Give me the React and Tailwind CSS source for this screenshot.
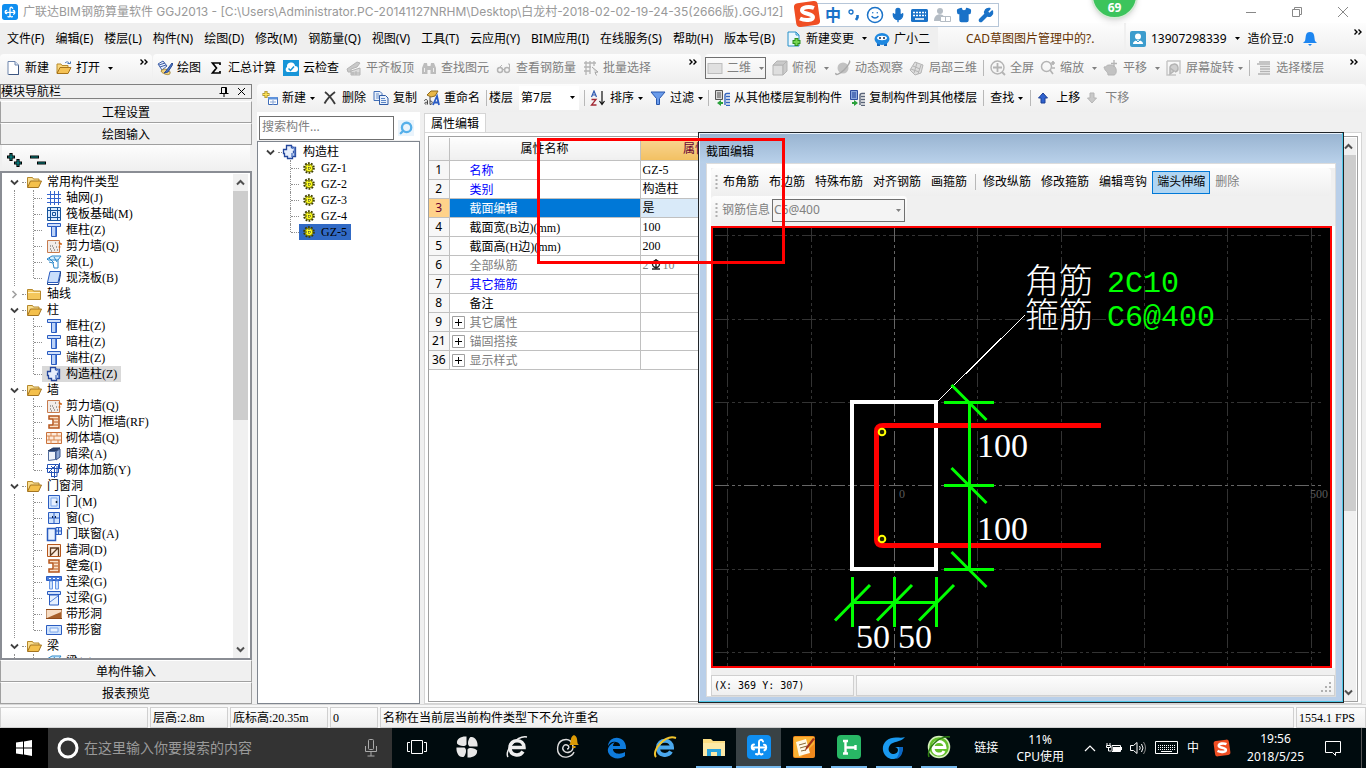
import React from "react";
import { Mic, Shirt, Wrench, Smile, Search } from "lucide-react";

const BAR = "bg-linear-to-b from-[#fdfdfd] to-[#efefef]";

function Svg({ w = 16, h = 16, vb, children, className = "" }) {
  return (
    <svg width={w} height={h} viewBox={vb || `0 0 ${w} ${h}`} className={`shrink-0 ${className}`} fill="none" aria-hidden="true">
      {children}
    </svg>
  );
}

const Arrow = ({ className = "" }) => (
  <Svg w={5} h={3} className={className}><path d="M0 0h5L2.5 3z" fill="currentColor" /></Svg>
);

const More = ({ className = "" }) => (
  <Svg w={8} h={6} className={className}><path d="M.5 0.5 3 3 .5 5.500M4.500 .5 7 3 4.500 5.500" stroke="#000" strokeWidth="1.400" /></Svg>
);

const Sep = ({ className = "" }) => <span className={`h-4 w-px shrink-0 bg-[#b8b8b8] ${className}`} />;

/* ---------- toolbar icons ---------- */
const G = "#b4b4b4";
const toolIcons = {
  doc: <><path d="M3 1.500h7l3.500 3.500v9.500H3z" fill="#fff" stroke="#6f86ad" /><path d="M10 1.500V5h3.500" stroke="#6f86ad" fill="#dce6f5" /><path d="M4 14.500h9.500v-9" stroke="#3c5580" /></>,
  open: <><path d="M1 13V4h4l1 1.500h6V8l-8 1z" fill="#f9d77e" stroke="#b98b2b" /><path d="M1 13.500 4 7.500h11l-3 6z" fill="#f5c255" stroke="#a8741a" /><path d="M9 3c2-2 4-1 4.500 1M11.500 3.500h3v-2" stroke="#4573b5" /></>,
  paint: <><path d="M1 4 6 1l4 5-5 4z" fill="#e7eefb" stroke="#3d5ea8" /><path d="M2 5l6-2M3 7l6-2" stroke="#3d5ea8" /><path d="M4 11c2-3 8-2 9 1s-3 3-5 2-3-1-4-3z" fill="#f2d27c" stroke="#a88a3a" /><path d="M15 3 9 11l-2 2 4-1 5-8z" fill="#4a76c9" stroke="#2c4c92" /></>,
  sum: <path d="M12 5V3H4.500l4 5-4 5H12v-2" stroke="#000" strokeWidth="1.700" />,
  cloud: <><rect width="16" height="16" fill="#1795d8" /><path d="M4 12a3 3 0 0 1 0-5 4 4 0 0 1 8-1 3 3 0 0 1 0 6z" fill="#fff" /><path d="m5.500 8.500 2 2 3.500-4" stroke="#1795d8" strokeWidth="1.500" /></>,
  align: <><path d="M1 9 11 2l3 1-3 4-6 2v3H2z" fill="#c9c9c9" stroke={G} /><path d="M5 15V11l9-3v7z" fill="#dcdcdc" stroke={G} /><path d="M7 15v-3M10 15v-4M5 13h9" stroke={G} /></>,
  find: <><path d="M1 14V8l2-5h3l.5 3h3l.5-3h3l2 5v6H9.500v-4h-3v4z" fill="#bdbdbd" /><path d="M3.500 12V8M12.500 12V8" stroke="#eee" /></>,
  glasses: <><circle cx="4" cy="10" r="2.500" stroke={G} strokeWidth="1.500" /><circle cx="11" cy="10" r="2.500" stroke={G} strokeWidth="1.500" /><path d="M6.500 9.500h2M2 9l4-4M13.500 9V4H12" stroke={G} /></>,
  batch: <><path d="M1 3h12M1 7h7M1 11h6M3 1v14M7 1v13M11 1v5" stroke={G} strokeWidth="1.300" /><path d="m9 7 6 5-3 .5 1.500 3" stroke="#a6a6a6" fill="#ddd" /></>,
  flat: <rect x="1" y="3.500" width="14" height="10" fill="#e0e0e0" stroke="#bdbdbd" />,
  cube: <><path d="M1 5h10v10H1z" fill="#dedede" stroke={G} /><path d="M1 5 5 1h10l-4 4zM11 15l4-4V1l-4 4z" fill="#cacaca" stroke={G} /></>,
  planet: <><circle cx="8" cy="8" r="5.500" fill="#c2c2c2" /><path d="M1 13c-1 3 4 1 8-3s7-9 5-9" stroke="#a9a9a9" strokeWidth="1.500" /></>,
  cubes: <><path d="M1 10 6 2l8 3-2 8-6 2z" fill="#ddd" stroke={G} /><path d="m4 6 7 3M8 3 5 13M12 5l-3 9M2 9l8 3" stroke={G} /></>,
  full: <><circle cx="7.500" cy="7.500" r="6.500" stroke={G} strokeWidth="1.400" /><path d="M7.500 3v9M3 7.500h9M12 12l3 3" stroke={G} strokeWidth="1.800" /></>,
  zoom: <><circle cx="6.500" cy="6.500" r="5" stroke={G} strokeWidth="1.500" /><path d="m10 10 3 4M11 3h4M13 1v4M12 8h3" stroke={G} strokeWidth="1.700" /></>,
  pan: <><path d="M1 7c3 0 2-2 5-2s6 0 7 4-1 6-2 6H5c0-4-3-3-4-8z" fill="#c2c2c2" stroke={G} /><path d="M11 0v7M8 3.500h6" stroke={G} strokeWidth="1.300" /></>,
  rotate: <><path d="M1 1h13v13M1 1v14h9" stroke="#c5c5c5" strokeWidth="1.400" /><path d="M4 8a4 4 0 1 1 5 4M4 8l4 3-4 3z" stroke={G} fill="#cfcfcf" strokeWidth="1.500" /></>,
  floors: <path d="M3 2h11M1 4h13M4 6.500h10M4 9h10M4 11.500h10M2 14h12" stroke={G} strokeWidth="1.500" />,
  add: <><path d="M6.500 7.500h9v7h-9z" fill="#fff" stroke="#3f6db8" /><path d="M6 7h9.500v2.500H6z" fill="#5f93dc" /><path d="M8 12h6M11 10v5" stroke="#8aa7d6" /><path d="M4 1v7M.5 4.500h7" stroke="#9d8420" strokeWidth="3" /><path d="M4 1.500v6M1 4.500h6" stroke="#ffe35a" strokeWidth="1.400" /></>,
  del: <path d="M3 2c4 3 7 7 10 12M13 2C9 5 5 9 2.500 13.500" stroke="#3b3b3b" strokeWidth="1.800" />,
  copy: <><path d="M1 1.500h6l2 2v7H1z" fill="#e8f0fb" stroke="#426fb7" /><path d="M3 4h3M3 6h4M3 8h4" stroke="#6b8fc9" /><path d="M6.500 5.500h6l2.500 2.500v6.500H6.500z" fill="#e8f0fb" stroke="#2f5ba5" /><path d="M8 8.500h4M8 10.500h5M8 12.500h5" stroke="#5d86c6" /></>,
  rename: <><path d="M3 5 7 1h7l-3 5-4 1z" fill="#e8b84a" stroke="#8f6a1e" /><path d="M.5 11c0-2 3-2 3 0v3.500M3.500 12.500c-3.500-1-3.500 2-1 1.500M6 7v7.500c3 0 3-4 0-3.500" stroke="#444" /><path d="m9 15 4-9 2 9M10 12.500h5" stroke="#2b5cc4" strokeWidth="1.800" /></>,
  sort: <><path d="m1.500 7 2.500-6 2.500 6M2.500 5h3" stroke="#2f59b0" strokeWidth="1.200" /><path d="M1.500 9.500H6L1.500 15H6.500" stroke="#a32a35" strokeWidth="1.300" /><path d="M12 1v13M9.500 11l2.500 3.500 2.500-3.500" stroke="#111" strokeWidth="1.200" /></>,
  filter: <path d="M1 2h14L9.500 8.500v6h-3v-6z" fill="#6a9ceb" stroke="#2957ad" />,
  floorCopy: <><path d="M1.500.5h7v9h-7z" fill="#d9d9d9" stroke="#555" /><path d="M3 3h4M3 5h4M3 7h4" stroke="#555" /><path d="M16 3.500h-3q-2 0-2 2v9.500M16 6.500h-4M16 9.500h-4M16 12.500h-4M16 15.500h-4" stroke="#3365c0" strokeWidth="1.400" /><path d="m7 10-4 3 4 3v-2h2v-2H7z" fill="#2aa13b" /></>,
  floorTo: <><path d="M1.500.5h7v9h-7z" fill="#8aa8de" stroke="#2f4fa0" /><path d="M3 3h4M3 5h4M3 7h4" stroke="#1d3f96" /><path d="M16 3.500h-3q-2 0-2 2v9.500M16 6.500h-4M16 9.500h-4M16 12.500h-4M16 15.500h-4" stroke="#5a6478" strokeWidth="1.400" /><path d="m5 10 4 3-4 3v-2H3v-2h2z" fill="#2aa13b" /></>,
  up: <path d="m5 1 4.500 5H7v5H3V6H.5z" fill="#2f62cf" stroke="#1c3f94" />,
  down: <path d="m5 11 4.500-5H7V1H3v5H.5z" fill="#c9c9c9" stroke="#b5b5b5" />,
  change: <><path d="M2 1h8l3 3v11H2z" fill="#eaf6fd" stroke="#2690c9" /><path d="M10 1v3h3" stroke="#2690c9" /><path d="M10.500 7v8M6.500 11h8" stroke="#2c8f1e" strokeWidth="4" /><path d="M10.500 8v6M7.500 11h6" stroke="#76d651" strokeWidth="2" /></>,
};

function Tool({ icon, label, arrow, disabled, small }) {
  return (
    <button type="button" disabled={disabled} className={`flex shrink-0 items-center gap-1 whitespace-nowrap ${disabled ? "text-[#808080]" : "text-black"}`}>
      {icon && (small ? <Svg w={14} h={12} vb="0 0 14 12">{toolIcons[icon]}</Svg> : <Svg>{toolIcons[icon]}</Svg>)}
      <span>{label}</span>
      {arrow && <Arrow className={arrow === "far" ? "ml-1" : ""} />}
    </button>
  );
}

/* ---------- tree icons ---------- */
const B = "#2a5cc0";
const O = "#b5561c";
const gzIcon = <><path d="M4.500 1.500h5v2h4v4h-2v1h2v4h-3v2h-5v-2h-3v-3h-1v-4h3z" fill="#e6eefc" stroke="#24479c" strokeWidth="1.300" /><path d="M10.500 2v3M12.500 3v9M10 9v4" stroke="#5d80c8" strokeWidth="1.500" /></>;
const nicheIcon = <><path d="M3 2h10v12H3v-3h4V5H3z" fill="#fbe1c8" stroke={O} strokeWidth="1.500" /><path d="M8 5h4M8 8h4M8 11h4" stroke={O} /></>;
const colIcon = <><path d="M1.500 1.500h13v3h-13z" fill="#cfe0fb" stroke={B} /><path d="M5.500 4.500h5v10h-5z" fill="#bcd3f8" stroke={B} /><path d="M9.500 5v9" stroke="#5482db" /></>;
const shearIcon = <><path d="M1.500 2.500h12v12h-12z" fill="#f2ece8" stroke="#c77b4e" /><path d="M4 11h1M6 8h1M8 12h1M10 9h1M5 13h1M9 5h1M11 12h1M4 8h1M7 10h1" stroke="#555" /><path d="M13.500 4v2M13.500 8v2M15 5v2" stroke="#d2691e" strokeWidth="1.500" /></>;
const treeIcons = {
  grid: <path d="M1 4.500h14M1 8.500h14M1 12.500h14M4.500 1v14M8.500 1v14M12.500 1v14" stroke="#3565cf" />,
  raft: <><path d="M1.500 1.500h13v13h-13z" fill="#dcecff" stroke="#16539b" /><path d="M1 4.500h14M1 11.500h14M4.500 1v14M11.500 1v14" stroke="#16539b" /><path d="M6.500 6.500h3v3h-3z" stroke="#16539b" /></>,
  column: colIcon,
  shear: shearIcon,
  beam: <><path d="M1 5 6 2h9l-3 4H2z" fill="#d6efff" stroke="#2a86c9" /><path d="M12 6v8H8l-1-5-4-1M3 4l5 5M8 3l3 5" stroke="#2a86c9" /></>,
  slab: <><path d="M4 1.500h10.500l-2.500 11H1.500z" fill="#c9defb" stroke={B} /><path d="M1.500 12.500v2h11l2-10v-3" stroke="#1c438f" /></>,
  gz: gzIcon,
  niche: nicheIcon,
  brick: <><path d="M.5 2.500h15v11H.5z" fill="#fdebdc" stroke="#c9713a" /><path d="M1 6h14M1 10h14M5 3v3M11 3v3M8 6v4M3 6v4M5 10v4M12 10v4" stroke="#d8864f" /></>,
  dark: <><path d="M2 5 7 2h7l-4 3z" fill="#2b4474" stroke="#22375f" /><path d="M2.500 5.500h7v8l-7 1z" fill="#eef3fb" stroke="#4f6a9b" /><path d="M10 5.500 14 3v8l-4 3z" fill="#8fa9d5" stroke="#3b558a" /></>,
  rebar: <><path d="M1.500 2.500h11v8h-11zM0 6.500h16M8.500 4v12M5.500 9v6M5 14.500h6V4M13.500 1v6" stroke="#2452b5" /><path d="M3 10 10 3M5 4l2 2" stroke="#2452b5" /></>,
  door: <><path d="M2.500 1.500h11v13h-11z" fill="#cfe3fd" stroke={B} /><path d="M5 4h6v8H5z" fill="#e7f1ff" stroke="#7fa8ea" /><path d="M10.500 7v2" stroke="#123" strokeWidth="1.500" /></>,
  window: <><path d="M2.500 2.500h11v11h-11z" fill="#cfe3fd" stroke={B} /><path d="M8 2v12M2 8h12" stroke={B} /><path d="M6.500 6v2M9.500 6v2" stroke="#124" /></>,
  doorwin: <><path d="M1.500 2.500h8v12h-8z" fill="#e7f1ff" stroke={B} strokeWidth="1.500" /><path d="M10 1.500h5.500v7H10zM12.500 1v8M10 5h6" fill="#cfe3fd" stroke={B} /></>,
  hole: <><path d="M1.500 2.500h13v12h-13z" fill="#fdebdc" stroke={O} /><path d="M4.500 14V6h8v8M5 13l7-7" stroke="#5b3a20" strokeWidth="1.300" /></>,
  lian: <><path d="M.5 2.500h15v4H.5z" fill="#4a7ddb" stroke={B} /><path d="M3.500 7h3v8h-3zM9.500 7h3v8h-3z" fill="#cfe3fd" stroke="#6796e6" /><path d="M3 4.500h2M7 4.500h2M11 4.500h2" stroke="#fff" /></>,
  guo: <><path d="M1.500 1.500h13v3h-13z" fill="#cfe0fb" stroke={B} /><path d="M3.500 5h9v10h-9z" fill="#e7f1ff" stroke={B} /><path d="m4 12 8-6" stroke="#5482db" /></>,
  striphole: <><path d="M0 3.500h16v9H0z" fill="#f7dcc2" stroke="#8f4a1a" /><path d="M1 12 15 6v6z" fill="#a8602b" /></>,
  stripwin: <><path d="M.5 3.500h15v9H.5z" fill="#cfe3fd" stroke={B} /><path d="M4 6h8v4H4z" fill="#eaf3ff" stroke="#7fa8ea" /></>,
  folder: <><path d="M1.500 13.500v-10h5l1 1.500h7v8.500z" fill="#f4c75c" stroke="#b5882c" /><path d="M2 6.500h12" stroke="#fff0bd" /></>,
  folderOpen: <><path d="M1.500 13v-9.500h5l1 1.500h5.500v3l-8 1z" fill="#fbdf90" stroke="#b5882c" /><path d="M1.500 13.500 4.500 7h11l-3 6.500z" fill="#f4c04c" stroke="#a37420" /></>,
};

const Chevron = ({ closed }) => (
  <Svg w={9} h={9}>
    {closed ? <path d="M2.500 1 6 4.500 2.500 8" stroke="#a0a0a0" strokeWidth="1.600" /> : <path d="M1 2.500 4.500 6 8 2.500" stroke="#404040" strokeWidth="1.800" />}
  </Svg>
);

const tree = [
  ["常用构件类型", [["grid", "轴网(J)"], ["raft", "筏板基础(M)"], ["column", "框柱(Z)"], ["shear", "剪力墙(Q)"], ["beam", "梁(L)"], ["slab", "现浇板(B)"]]],
  ["轴线", null],
  ["柱", [["column", "框柱(Z)"], ["column", "暗柱(Z)"], ["column", "端柱(Z)"], ["gz", "构造柱(Z)", true]]],
  ["墙", [["shear", "剪力墙(Q)"], ["niche", "人防门框墙(RF)"], ["brick", "砌体墙(Q)"], ["dark", "暗梁(A)"], ["rebar", "砌体加筋(Y)"]]],
  ["门窗洞", [["door", "门(M)"], ["window", "窗(C)"], ["doorwin", "门联窗(A)"], ["hole", "墙洞(D)"], ["niche", "壁龛(I)"], ["lian", "连梁(G)"], ["guo", "过梁(G)"], ["striphole", "带形洞"], ["stripwin", "带形窗"]]],
  ["梁", [["beam", "梁(L)"]]],
];

const SIM = "font-['Liberation_Serif','Noto_Sans_CJK_SC',serif]";

function ChildRow({ icon, label, last, tone = "" }) {
  return (
    <li className="flex h-4 items-center">
      <span className={`w-px self-start border-l border-dotted border-[#909090] ${last ? "h-2" : "h-4"}`} />
      <span className="w-2 border-t border-dotted border-[#909090]" />
      <button type="button" className={`flex h-4 items-center gap-1 whitespace-nowrap pr-1 pl-1 ${tone}`}>
        {icon}
        <span>{label}</span>
      </button>
    </li>
  );
}

function ParentRow({ closed, icon, label }) {
  return (
    <button type="button" className="flex h-4 items-center whitespace-nowrap">
      <Chevron closed={closed} />
      <span className="ml-[3px] w-1 border-t border-dotted border-[#909090]" />
      <Svg className="mr-[5px]">{icon}</Svg>
      <span>{label}</span>
    </button>
  );
}

function ModuleTree() {
  return (
    <ul className={`min-w-0 flex-1 overflow-hidden pl-2 leading-4 ${SIM}`}>
      {tree.map(([name, kids]) => (
        <li key={name}>
          <ParentRow closed={!kids} icon={kids ? treeIcons.folderOpen : treeIcons.folder} label={name} />
          {kids && (
            <ul className="ml-1 border-l border-dotted border-[#909090] pl-[18px]">
              {kids.map(([ic, label, sel], i) => (
                <ChildRow key={label} last={i === kids.length - 1} label={label} tone={sel ? "bg-[#d9d9d9]" : ""} icon={<Svg>{treeIcons[ic]}</Svg>} />
              ))}
            </ul>
          )}
        </li>
      ))}
    </ul>
  );
}

function ScrollBar({ thumb }) {
  return (
    <div className="flex w-[15px] shrink-0 flex-col items-center bg-[#f0f0f0]">
      <div className="flex h-[17px] items-center"><Svg w={9} h={9}><path d="M1 6.500 4.500 3 8 6.500" stroke="#505050" strokeWidth="2" /></Svg></div>
      <div className="w-full flex-1"><div className={`w-full bg-[#cdcdcd] ${thumb}`} /></div>
      <div className="flex h-[17px] items-center"><Svg w={9} h={9}><path d="M1 2.500 4.500 6 8 2.500" stroke="#505050" strokeWidth="2" /></Svg></div>
    </div>
  );
}

const NavButton = ({ children }) => (
  <button type="button" className="h-[22px] w-full shrink-0 border border-[#a0a0a0] border-t-white bg-[#f0f0f0] text-center leading-[22px]">{children}</button>
);

function LeftPanel() {
  return (
    <aside className="flex w-[253px] shrink-0 flex-col pr-px">
      <div className="mb-0.5 flex h-[15px] shrink-0 items-center border border-[#808080] leading-[14px]">
        <span className="flex-1">模块导航栏</span>
        <button type="button" aria-label="固定" className="mr-1.5 flex size-3 items-center"><Svg w={10} h={10}><path d="M2.500 6V.5h5V6M.5 6.500h9M5 7v3M6.500 1v5" stroke="#000" /></Svg></button>
        <button type="button" aria-label="关闭" className="mr-0.5 flex size-3 items-center"><Svg w={9} h={9}><path d="m1 1 7 7M8 1 1 8" stroke="#000" /></Svg></button>
      </div>
      <NavButton>工程设置</NavButton>
      <NavButton>绘图输入</NavButton>
      <div className={`mx-0.5 flex h-[26px] shrink-0 items-center gap-2 px-1 pt-1 ${BAR}`}>
        <button type="button" aria-label="全部展开"><Svg><path d="M5 1v8M1 5h8M12 7v8M8 11h8" stroke="#000" strokeWidth="3.200" /><path d="M5 2v6M2 5h6M12 8v6M9 11h6" stroke="#0a8f8f" strokeWidth="1.200" /></Svg></button>
        <button type="button" aria-label="全部折叠"><Svg><path d="M0 5h9M7 11h9" stroke="#000" strokeWidth="3.200" /><path d="M1 5h7M8 11h7" stroke="#0a8f8f" strokeWidth="1.200" /></Svg></button>
      </div>
      <div className="flex min-h-0 flex-1 border-2 border-[#8a8d94] bg-white pt-px pr-0.5">
        <ModuleTree />
        <ScrollBar thumb="h-[229px]" />
      </div>
      <NavButton>单构件输入</NavButton>
      <NavButton>报表预览</NavButton>
    </aside>
  );
}

const sun = (
  <Svg w={12} h={12}>
    <circle cx="6" cy="6" r="4.800" stroke="#3d3d00" strokeWidth="2" strokeDasharray="1.800 1.200" />
    <circle cx="6" cy="6" r="3.800" fill="#ffff20" stroke="#7d7d00" />
    <path d="M6 3v6M3 6h6" stroke="#333" strokeDasharray="1 1" />
  </Svg>
);

function ComponentList() {
  return (
    <section className="flex w-[163px] shrink-0 flex-col">
      <div className="flex h-7 shrink-0 items-center bg-white px-0.5 pt-1">
        <input aria-label="搜索构件" placeholder="搜索构件..." className="h-6 w-[135px] border border-[#6f6f6f] bg-white pb-1 pl-0.5 outline-none placeholder:text-[#808080]" />
        <button type="button" aria-label="搜索" className="ml-1 flex size-4 items-center justify-center bg-[#eaf4fc] text-[#56b0ea]"><Search size={14} strokeWidth={4} className="-scale-x-100" /></button>
      </div>
      <div className={`mt-px min-h-0 flex-1 border border-[#7f858e] bg-white pt-0.5 pl-2 leading-4 ${SIM}`}>
        <ParentRow icon={gzIcon} label="构造柱" />
        <ul className="pl-6">
          {["GZ-1", "GZ-2", "GZ-3", "GZ-4", "GZ-5"].map((n, i) => (
            <ChildRow key={n} last={i === 4} label={n} tone={i === 4 ? "bg-[#316ac5]" : ""} icon={<span className="flex w-3.5">{sun}</span>} />
          ))}
        </ul>
      </div>
    </section>
  );
}

const rows = [
  ["1", "名称", "GZ-5", "text-[#0000ff]"],
  ["2", "类别", "构造柱", "text-[#0000ff]"],
  ["3", "截面编辑", "是", "sel"],
  ["4", "截面宽(B边)(mm)", "100", ""],
  ["5", "截面高(H边)(mm)", "200", ""],
  ["6", "全部纵筋", "rebar", "text-[#808080]"],
  ["7", "其它箍筋", "", "text-[#0000ff]"],
  ["8", "备注", "", ""],
  ["9", "其它属性", "", "plus"],
  ["21", "锚固搭接", "", "plus"],
  ["36", "显示样式", "", "plus"],
];

function PropertyPanel() {
  return (
    <section className="flex min-w-0 flex-1 flex-col pr-1">
      <div className="flex h-5 shrink-0 items-end">
        <button type="button" className="-mb-px h-5 border border-b-0 border-[#d5d5d5] bg-white px-1.5 leading-[18px]">属性编辑</button>
      </div>
      <div className="flex min-h-0 flex-1 border border-[#d5d5d5] bg-white p-[3px] pb-px">
        <div className="flex min-h-0 min-w-0 flex-1 border border-[#a0a0a0] pt-px pr-px">
          <div className="min-w-0 flex-1">
            <table className={`w-full table-fixed border-collapse leading-4 ${SIM}`}>
              <colgroup><col className="w-5" /><col className="w-[191px]" /><col className="w-[122px]" /><col /></colgroup>
              <thead>
                <tr className="h-[22px]">
                  <th className={`border-r border-b border-[#c0c0c0] ${BAR}`} aria-label="序号" />
                  <th className={`border-r border-b border-[#c0c0c0] font-normal ${BAR}`}>属性名称</th>
                  <th className="border-r border-b border-[#c0c0c0] bg-linear-to-b from-[#f9d693] to-[#f2c062] font-normal text-[#660033]">属性值</th>
                  <th className={`border-b border-[#c0c0c0] ${BAR}`} aria-label="附加" />
                </tr>
              </thead>
              <tbody>
                {rows.map(([n, name, val, kind]) => (
                  <tr key={n} className="h-[19px]">
                    <td className={`border-r border-b border-[#c0c0c0] p-0 text-center font-['Noto_Sans',sans-serif] ${kind === "sel" ? "bg-[#ffd28a] text-[#660033]" : "bg-[#f7f7f7]"}`}>{n}</td>
                    <td className={`border-r border-b border-[#c0c0c0] p-0 whitespace-nowrap ${kind === "sel" ? "bg-[#0078d7] text-white" : kind === "plus" ? "text-[#808080]" : kind}`}>
                      <div className="flex items-center pt-0.5 pl-0.5">
                        <span className="flex w-[18px]">
                          {kind === "plus" && <Svg w={13} h={13}><path d="M.5.5h12v12H.5z" stroke="#a0a0a0" /><path d="M3 6.500h7M6.500 3v7" stroke="#000" /></Svg>}
                        </span>
                        {name}
                      </div>
                    </td>
                    <td className={`border-r border-b border-[#c0c0c0] p-0 pl-0.5 whitespace-nowrap ${kind === "sel" ? "bg-[#d9eaf9]" : ""}`}>
                      {val === "rebar" ? (
                        <span className="flex items-center gap-0.5 text-[#808080]">2<Svg w={10} h={11}><circle cx="5" cy="5" r="3.500" stroke="#222" strokeWidth="1.400" /><path d="M5 0v10M1 10h8" stroke="#222" strokeWidth="1.400" /></Svg>10</span>
                      ) : val}
                    </td>
                    <td className={`border-b border-[#c0c0c0] p-0 ${kind === "sel" ? "bg-[#d9eaf9]" : ""}`} />
                  </tr>
                ))}
              </tbody>
            </table>
          </div>
          <ScrollBar thumb="h-[356px]" />
        </div>
      </div>
    </section>
  );
}

/* ---------- section drawing ---------- */
function SectionDrawing() {
  const dash = "14 3 3 3 3 3";
  return (
    <svg viewBox="713 228 617 438" preserveAspectRatio="xMidYMid slice" className="block h-full w-full bg-black" role="img" aria-label="构造柱截面">
      <g stroke="#333" strokeDasharray={dash}>
        {[727.5, 811.5, 977.5, 1061.5, 1144.5, 1227.5, 1311.5].map((x) => <path key={x} d={`M${x} 228V666`} />)}
        {[235.5, 319.5, 402.5, 569.5, 652.5].map((y) => <path key={y} d={`M715 ${y}H1324`} />)}
      </g>
      <path d="M894.500 228V666M715 485.500H1324" stroke="#666" strokeDasharray={dash} />
      <g fontFamily="'Liberation Serif', serif" fontSize="12" fill="#5a5a5a"><text x="899" y="498">0</text><text x="1310" y="498">500</text></g>
      <path d="M938 401 1025 315" stroke="#fff" shapeRendering="crispEdges" />
      <rect x="852" y="402" width="84" height="167" stroke="#fff" strokeWidth="4" fill="none" />
      <path d="M1101 425.500H883q-6.500 0-6.500 6v108q0 6 6.500 6H1101" stroke="#f00" strokeWidth="5" fill="none" />
      <circle cx="882" cy="432" r="3.300" stroke="#ff0" strokeWidth="2" fill="#220" />
      <circle cx="882" cy="539" r="3.300" stroke="#ff0" strokeWidth="2" fill="#220" />
      <g stroke="#0f0" strokeWidth="3">
        <path d="M969.500 402V570M852 602.500H937" />
        {[402.5, 485.5, 569.5].map((y) => <path key={y} d={`M944 ${y}H994M951.500 ${y - 17.5}l35 35`} />)}
        {[852.5, 894.5, 936.5].map((x) => <path key={x} d={`M${x} 577V627M${x - 17.5} 620.500l35 -35.500`} />)}
      </g>
      <g fill="#fff" fontFamily="'Liberation Serif', 'Noto Sans CJK SC', serif" fontSize="34">
        <text x="977" y="457">100</text>
        <text x="977" y="540">100</text>
        <text x="856" y="648">50</text>
        <text x="898" y="648">50</text>
        <g fontWeight="300"><text x="1025" y="293">角筋</text><text x="1025" y="327">箍筋</text></g>
      </g>
      <g fill="#0f0" fontFamily="'Liberation Mono', monospace" fontSize="30">
        <text x="1107" y="292">2C10</text>
        <text x="1107" y="326">C6@400</text>
      </g>
    </svg>
  );
}

const Grip = () => <Svg w={3} h={15}><path d="M1.500 0v15" stroke="#b0b0b0" strokeWidth="2" strokeDasharray="2 2" /></Svg>;
const DlgButton = ({ children, active, disabled }) => (
  <button type="button" disabled={disabled} className={`h-[23px] border px-1 whitespace-nowrap ${active ? "border-[#0078d7] bg-[#b0d5f2]" : "border-transparent"} ${disabled ? "text-[#808080]" : ""}`}>{children}</button>
);

function SectionDialog() {
  return (
    <div role="dialog" aria-label="截面编辑" className="absolute top-[132px] left-[698px] flex h-[571px] w-[646px] flex-col border border-[#202428] bg-[#b9cfe9] px-[7px] pb-[5px] shadow-[inset_-1px_-1px_0_#4fc8e8,inset_1px_1px_0_#e8f2fc]">
      <h2 className="-mx-1.5 mt-px h-[29px] shrink-0 bg-linear-to-b from-[#99b4d1] to-[#b9d1ea] pl-1.5 leading-[36px]">截面编辑</h2>
      <div className="flex min-h-0 flex-1 flex-col border border-[#dcdcdc] bg-white pt-1 pl-1">
        <div className="shrink-0 bg-[#f0f0f0]">
          <div className={`mr-1 flex h-7 items-center rounded-sm pl-1 ${BAR}`}>
            <Grip />
            <DlgButton>布角筋</DlgButton><DlgButton>布边筋</DlgButton><DlgButton>特殊布筋</DlgButton><DlgButton>对齐钢筋</DlgButton><DlgButton>画箍筋</DlgButton>
            <Sep className="mr-0.5 ml-[3px]" />
            <DlgButton>修改纵筋</DlgButton><DlgButton>修改箍筋</DlgButton><DlgButton>编辑弯钩</DlgButton><DlgButton active>端头伸缩</DlgButton><DlgButton disabled>删除</DlgButton>
          </div>
          <div className="flex h-[30px] items-start text-[#808080]">
            <label className={`flex h-7 items-center rounded-sm pr-0.5 pl-1 ${BAR}`}>
              <Grip />
              <span className="ml-1">钢筋信息</span>
              <span className="relative ml-0.5 flex">
                <select disabled className="h-[23px] w-[133px] appearance-none border border-[#707070] bg-[#f4f4f4] pl-px text-[#808080]"><option>C6@400</option></select>
                <Arrow className="absolute top-2.5 right-1" />
              </span>
            </label>
          </div>
        </div>
        <div className="mr-[3px] min-h-0 flex-1 border-2 border-[#f00]"><SectionDrawing /></div>
        <div className="flex h-7 shrink-0 items-end gap-0.5 bg-[#f0f0f0]">
          <div className={`h-[21px] w-[143px] border border-[#d0d0d0] pl-0.5 font-['DejaVu_Sans_Mono',monospace] text-[10px] leading-[19px] ${BAR}`}>(X: 369 Y: 307)</div>
          <div className={`flex h-[21px] flex-1 items-end justify-end border border-[#d0d0d0] p-0.5 ${BAR}`}>
            <Svg w={11} h={11}><path d="M8 0h2v2H8zM8 4h2v2H8zM8 8h2v2H8zM4 4h2v2H4zM4 8h2v2H4zM0 8h2v2H0z" fill="#b0b0b0" /></Svg>
          </div>
        </div>
      </div>
    </div>
  );
}

/* ---------- brand marks ---------- */
const appArt = <><rect width="24" height="24" rx="4" fill="#0f8ef0" /><path d="M16 6.500c-1-2.500-4-2-4 .5v9c0 3-1 4-3 3M7 9.500c-3 0-3 5 0 5M5.500 12.500h13M17 9.800c2.500 0 3 4.500 .5 5.500M12 17c0 2 2 3 3.500 2" stroke="#fff" strokeWidth="2" strokeLinecap="round" /></>;
const SogouMark = ({ s }) => (
  <Svg w={s} h={s} vb="0 0 28 28"><rect x="2" y="2" width="24" height="24" rx="4" fill="#f04e23" transform="rotate(-8 14 14)" /><path d="M21 8c-5-2-12-1-12 2.500s11 3 11 6.500-8 4-13 1.500" stroke="#fff" strokeWidth="4" /></Svg>
);

function ImeBar() {
  return (
    <div className="absolute top-[3px] left-[800px] flex h-6 w-[199px] items-center justify-between border border-[#b6c6d8] bg-white pr-1 pl-6 text-[#1a72c8]">
      <span className="absolute -top-1 -left-2"><SogouMark s={28} /></span>
      <button type="button" className="text-[16px] leading-5 font-bold">中</button>
      <Svg w={14} h={16}><circle cx="4" cy="5" r="2" stroke="#1a72c8" strokeWidth="1.300" /><path d="M10.500 8v2.500L9 13" stroke="#1a72c8" strokeWidth="2.600" /></Svg>
      <Smile size={18} />
      <Mic size={16} fill="currentColor" />
      <Svg w={17} h={13}><rect y="0" width="17" height="13" rx="1.500" fill="#1a72c8" /><path d="M2 3.500h13M2 6.500h13" stroke="#fff" strokeWidth="1.600" strokeDasharray="2 1" /><path d="M4 10h9" stroke="#fff" strokeWidth="1.600" /></Svg>
      <Svg w={17} h={16}><circle cx="6" cy="4" r="3" fill="#b4bcc4" /><path d="M0 14c0-8 9-8 10-4v4z" fill="#b4bcc4" /><path d="M6.500 9.500h10v5h-10zM11.500 9v6" fill="#fff" stroke="#b4bcc4" /></Svg>
      <Shirt size={16} fill="currentColor" />
      <Wrench size={16} fill="currentColor" />
    </div>
  );
}

const menus = ["文件(F)", "编辑(E)", "楼层(L)", "构件(N)", "绘图(D)", "修改(M)", "钢筋量(Q)", "视图(V)", "工具(T)", "云应用(Y)", "BIM应用(I)", "在线服务(S)", "帮助(H)", "版本号(B)"];

function TopBars() {
  return (
    <header className="shrink-0">
      <div className="flex h-[23px] items-center bg-white pl-0.5">
        <Svg vb="0 0 24 24">{appArt}</Svg>
        <h1 className="ml-[5px] flex-1 font-['Inter','Noto_Sans_CJK_SC',sans-serif] whitespace-nowrap text-[#999]">广联达BIM钢筋算量软件 GGJ2013 - [C:\Users\Administrator.PC-20141127NRHM\Desktop\白龙村-2018-02-02-19-24-35(2666版).GGJ12]</h1>
        <button type="button" aria-label="最小化" className="flex h-full w-[46px] items-center justify-center"><Svg w={10} h={10}><path d="M0 5.500h10" stroke="#888" /></Svg></button>
        <button type="button" aria-label="还原" className="flex h-full w-[46px] items-center justify-center"><Svg w={10} h={10}><path d="M.5 2.500h7v7h-7zM2.500 2V.5h7v7H8" stroke="#888" /></Svg></button>
        <button type="button" aria-label="关闭" className="flex h-full w-[46px] items-center justify-center"><Svg w={10} h={10}><path d="m0 0 10 10M10 0 0 10" stroke="#888" /></Svg></button>
      </div>
      <div className="flex h-[31px]">
        <nav className="flex items-center gap-[11px] bg-[#efefef] pl-[7px] whitespace-nowrap">
          {menus.map((m) => <button type="button" key={m}>{m}</button>)}
          <button type="button" className="flex items-center gap-1"><Svg>{toolIcons.change}</Svg>新建变更<Arrow className="ml-1" /></button>
          <button type="button" className="-ml-1 flex items-center gap-1 pr-2">
            <Svg><path d="M3 12h3v3H3zM10 12h3v3h-3z" fill="#1565b8" /><ellipse cx="8" cy="8" rx="7.500" ry="6" fill="#1e88e0" /><path d="M3 7c0-3 10-3 10 0s-10 3-10 0z" fill="#fff" /><circle cx="6" cy="7" r="1" fill="#124" /><circle cx="10" cy="7" r="1" fill="#124" /></Svg>广小二
          </button>
        </nav>
        <div className={`flex min-w-0 flex-1 items-center pl-7 whitespace-nowrap text-[#663300] ${BAR}`}>CAD草图图片管理中的?.</div>
        <div className={`ml-0.5 flex w-[240px] shrink-0 items-center pl-1 whitespace-nowrap ${BAR}`}>
          <Svg className="mr-[5px]"><rect width="16" height="16" rx="2" fill="#3c9ccd" /><circle cx="8" cy="5.500" r="3" fill="#fff" /><path d="M3 13c0-5 10-5 10 0z" fill="#fff" /><path d="m6 9 2 2 2-2" stroke="#3c9ccd" /></Svg>
          13907298339<Arrow className="mx-2" /><span>造价豆:0</span>
          <Svg className="ml-2 text-[#1e86f0]"><path d="M8 1c5 0 4 5 5 9l2 2H1l2-2c1-4 0-9 5-9zM6 13h4l-2 2z" fill="currentColor" /></Svg>
          <More className="mr-1 mb-3.5 ml-auto" />
        </div>
      </div>
      <div className="flex h-[30px] bg-[#f0f0f0] pb-0.5">
        <div className={`flex w-[152px] shrink-0 items-center gap-[7px] rounded pl-[5px] ${BAR}`}>
          <Tool icon="doc" label="新建" /><Tool icon="open" label="打开" arrow="far" />
          <More className="mr-1 mb-3 ml-auto" />
        </div>
        <div className={`ml-px flex w-[548px] shrink-0 items-center gap-[7px] rounded pl-1 ${BAR}`}>
          <Tool icon="paint" label="绘图" /><Tool icon="sum" label="汇总计算" /><Tool icon="cloud" label="云检查" />
          <Tool icon="align" label="平齐板顶" disabled /><Tool icon="find" label="查找图元" disabled /><Tool icon="glasses" label="查看钢筋量" disabled /><Tool icon="batch" label="批量选择" disabled />
          <More className="mr-1 mb-3 ml-auto" />
        </div>
        <div className={`ml-1 flex min-w-0 flex-1 items-center gap-1.5 rounded ${BAR}`}>
          <span className="flex h-[22px] items-center border border-[#707070] px-px"><Tool icon="flat" label="二维" arrow="far" disabled /></span>
          <Tool icon="cube" label="俯视" arrow="far" disabled />
          <Tool icon="planet" label="动态观察" disabled /><Tool icon="cubes" label="局部三维" disabled />
          <Sep />
          <Tool icon="full" label="全屏" disabled />
          <Tool icon="zoom" label="缩放" arrow="far" disabled /><Tool icon="pan" label="平移" arrow="far" disabled /><Tool icon="rotate" label="屏幕旋转" arrow disabled />
          <Sep /><Tool icon="floors" label="选择楼层" disabled />
          <More className="mr-2 mb-3 ml-auto" />
        </div>
      </div>
    </header>
  );
}

function EditBar() {
  return (
    <div className={`flex h-7 shrink-0 items-center gap-[7px] rounded pl-[5px] ${BAR}`}>
      <Tool icon="add" label="新建" arrow /><Tool icon="del" label="删除" /><Tool icon="copy" label="复制" /><Tool icon="rename" label="重命名" />
      <Sep className="-mx-px" />
      <label className="-ml-1 flex items-center gap-1.5">楼层
        <span className="relative flex"><select className="h-6 w-[60px] appearance-none bg-white pl-0.5"><option>第7层</option></select><Arrow className="absolute top-2.5 right-1" /></span>
      </label>
      <Sep className="-mx-0.5" />
      <Tool icon="sort" label="排序" arrow /><Tool icon="filter" label="过滤" arrow />
      <Sep className="-mx-0.5" /><Tool icon="floorCopy" label="从其他楼层复制构件" /><Tool icon="floorTo" label="复制构件到其他楼层" />
      <Sep className="-mx-px" /><Tool label="查找" arrow /><Sep />
      <Tool icon="up" small label="上移" /><Tool icon="down" small label="下移" disabled />
    </div>
  );
}

function StatusBar() {
  const cell = `h-[21px] shrink-0 border border-[#d0d0d0] px-0.5 leading-5 whitespace-nowrap ${BAR}`;
  return (
    <footer className={`flex h-6 shrink-0 items-end gap-0.5 border-t border-[#d8d8d8] bg-[#f7f7f7] ${SIM}`}>
      <div className={`${cell} w-[148px]`} />
      <div className={`${cell} w-[78px]`}>层高:2.8m</div>
      <div className={`${cell} w-[98px]`}>底标高:20.35m</div>
      <div className={`${cell} w-12`}>0</div>
      <div className={`${cell} flex-1`}>名称在当前层当前构件类型下不允许重名</div>
      <div className={`${cell} w-[70px]`}>1554.1 FPS</div>
    </footer>
  );
}

const apps = [
  ["文件资源管理器", "run", <><path d="M1 4h8l2 2h12v15H1z" fill="#fbdd83" /><path d="M1 8h22v13H1z" fill="#fce9a6" /><path d="M5 21v-7h14v7h-4v-4H9v4z" fill="#29a3dd" /></>],
  ["广联达", "active", appArt],
  ["记事", "run", <><rect x="1" y="1" width="22" height="22" rx="2" fill="#f08a1d" /><path d="M2 2h20v7L9 22H2z" fill="#f9b233" /><path d="m4 7 10-3 4 14-11 3z" fill="#fff8e6" /><path d="m7 10 7-2M8 13l7-2M9 16l5-1" stroke="#8a6a3a" /><path d="m21 3-7 9-1 4 3-3 7-9z" fill="#a0331a" /></>],
  ["土建", "run", <><rect width="24" height="24" rx="4" fill="#28b765" /><path d="M6 6h5M8.500 6v13M6 18.500h5M8.500 12.500H19M18.500 10v5" stroke="#fff" strokeWidth="2.400" /></>],
  ["浏览器", "run", <><path d="M23 2c-5 2-13-2-19 4S1 22 9 24c7 1 12-5 12-12h-8c5 1 3 7-1 7-5 0-7-5-4-9s10-2 15-8z" fill="#1a9af0" /><path d="M14 24c5-1 7-6 7-12h-4c1 6-1 9-3 12z" fill="#0b66c4" /></>],
  ["安全浏览器", "run", <><circle cx="12" cy="12" r="10.500" fill="#63bf2b" stroke="#d5f0bd" strokeWidth="1.500" /><path d="M6 12.500h12c0-8-12-8-12 0s9 8 11 3.500" stroke="#fff" strokeWidth="3" /><path d="M2 22C-1 14 12 0 23 2" stroke="#2c7d12" strokeWidth="1.500" /></>],
];

const ePath = "M4 14h17c1-14-17-15-18-3 2-4 5-5 8-4 3 .5 4 2 4 4H8c0-2 1-3 2-4-6 2-9 8-6 12 3 5 11 6 16 2v-4c-5 3-12 2-12-3z";

function TaskIcon({ label, children, wide = true, running, active }) {
  return (
    <button type="button" aria-label={label} className={`flex h-10 shrink-0 flex-col items-center ${wide ? "w-[50px]" : "w-[45px]"} ${active ? "bg-[#394245]" : ""}`}>
      <span className="flex flex-1 items-center"><Svg w={24} h={24}>{children}</Svg></span>
      <span className={`h-0.5 ${active ? "w-full" : "w-9"} ${running ? "bg-[#76b9ed]" : ""}`} />
    </button>
  );
}

function TaskBar() {
  return (
    <footer className="flex h-10 shrink-0 items-center overflow-hidden bg-[#000b0e] text-white">
      <button type="button" aria-label="开始" className="flex h-10 w-12 shrink-0 items-center justify-center bg-black"><Svg><path d="m0 2.500 7-1v6H0zM8 1.400 16 0v7.500H8zM0 8.500h7v6l-7-1zM8 8.500h8V16l-8-1.400z" fill="#fff" /></Svg></button>
      <label className="flex h-10 w-[344px] shrink-0 items-center bg-[#333] pl-2">
        <Svg w={24} h={24}><circle cx="12" cy="12" r="9" stroke="#fff" strokeWidth="3" /></Svg>
        <input aria-label="搜索" placeholder="在这里输入你要搜索的内容" className="ml-1 min-w-0 flex-1 bg-transparent text-[14px] outline-none placeholder:text-[#9a9a9a]" />
        <Svg w={12} h={18} className="mr-[15px]"><rect x="3.500" y=".5" width="5" height="10" rx="1" stroke="#aaa" /><path d="M.5 7v5.500h11V7M6 13v4M2.500 17h7" stroke="#aaa" /></Svg>
      </label>
      <TaskIcon label="任务视图"><path d="M6.500 5.500h11v13h-11zM5 7.500H2.500v9H5M19 7.500h2.500v9H19" stroke="#fff" /></TaskIcon>
      <TaskIcon label="应用"><g fill="#e8e8e8"><path d="M11.500 1.500v8c-2 3-8 1-9.500-1-1-5 5-7.500 9.500-7z" /><path d="M22.500 11.500h-8c-3-2-1-8 1-9.500 5-1 7.500 5 7 9.500z" /><path d="M12.500 22.500v-8c2-3 8-1 9.500 1 1 5-5 7.500-9.500 7z" /><path d="M1.500 12.500h8c3 2 1 8-1 9.500-5 1-7.500-5-7-9.500z" /></g></TaskIcon>
      <TaskIcon label="浏览器"><path d="M5 12.500h14c0-9-14-9-14 0s10 9 13 4" stroke="#eee" strokeWidth="3.500" /><path d="M3 22C-1 16 12 0 22 2" stroke="#eee" strokeWidth="1.500" /></TaskIcon>
      <TaskIcon label="提醒"><path d="M19 17c-2 5-10 7-14 3S2 7 8 5s10 2 10 7-6 7-9 4 0-7 3-6 2 4 0 4" stroke="#ddd" strokeWidth="1.400" /><path d="M14 10c3-1 0-8 5-10 5 2 2 9 5 10zM17.500 11h3v2h-3z" fill="#dc9b05" /></TaskIcon>
      <TaskIcon label="Edge"><path d={ePath} fill="#0e7bdc" /></TaskIcon>
      <TaskIcon wide={false} label="Internet Explorer"><path d="M5 12.500h14c0-9-14-9-14 0s10 9 13 4" stroke="#4aa8ee" strokeWidth="4" /><path d="M3 22C-2 16 12-1 23 3" stroke="#f2c52d" strokeWidth="2" /></TaskIcon>
      <div className="ml-1 flex">
        {apps.map(([label, state, art]) => <TaskIcon key={label} wide={false} label={label} running active={state === "active"}>{art}</TaskIcon>)}
      </div>
      <div className="ml-auto flex shrink-0 items-center whitespace-nowrap">
        <span>链接</span>
        <span className="ml-[18px] text-center leading-[17px]">11%<br />CPU使用</span>
        <Svg w={12} h={8} className="ml-5"><path d="m1 7 5-5 5 5" stroke="#fff" strokeWidth="1.200" /></Svg>
        <Svg className="ml-2.5"><path d="M6 5.500h8.500v6H6zM15.500 7v3" stroke="#fff" /><path d="M7 7h7v4H7z" fill="#fff" /><path d="M1 3v2M4 3v2M.5 5.500h4v2h-4zM2.500 8v3H5" stroke="#fff" /></Svg>
        <Svg w={17} className="ml-2"><path d="M.5 5.500h3L7 2.500v11l-3.500-3h-3zM9.500 6q1.500 2 0 4M11.500 4q3 4 0 8" stroke="#fff" /><path d="M13.500 2q4 6 0 12" stroke="#888" /></Svg>
        <Svg w={24} h={14} className="ml-2"><path d="M.5.500h22v12H.5z" stroke="#fff" /><path d="M3 4.500h17M3 6.500h17M3 8.500h17" stroke="#fff" strokeDasharray="1 1" /><path d="M6 10.500h11" stroke="#fff" /></Svg>
        <span className="ml-2">中</span>
        <span className="ml-3.5"><SogouMark s={18} /></span>
        <time className="ml-4 text-center leading-[18px]">19:56<br />2018/5/25</time>
        <Svg w={18} h={18} className="ml-5"><path d="M1.500 2.500h15v11h-5v3l-3-3h-7z" stroke="#fff" /></Svg>
        <span className="ml-[19px] h-10 w-px bg-[#555]" />
        <span className="w-1" />
      </div>
    </footer>
  );
}

export default function App() {
  return (
    <div className="relative flex h-screen flex-col overflow-hidden bg-[#f0f0f0] font-['Noto_Sans','Noto_Sans_CJK_SC',sans-serif] text-[12px] leading-4 text-black">
      <TopBars />
      <main className="flex min-h-0 flex-1">
        <LeftPanel />
        <div className="ml-1 flex min-w-0 flex-1 flex-col">
          <EditBar />
          <div className="flex min-h-0 flex-1 gap-1">
            <ComponentList />
            <PropertyPanel />
          </div>
        </div>
      </main>
      <StatusBar />
      <TaskBar />
      <SectionDialog />
      <div className="pointer-events-none absolute top-[138px] left-[537px] h-[126px] w-[248px] border-3 border-[#f00]" />
      <ImeBar />
      <div className="absolute -top-7 left-[1091px] flex size-[47px] items-end justify-center rounded-full border-2 border-[#d5e8d5] bg-[#3cc45c] pb-0.5 text-[12px] leading-[14px] font-bold text-white shadow-md">69</div>
    </div>
  );
}
